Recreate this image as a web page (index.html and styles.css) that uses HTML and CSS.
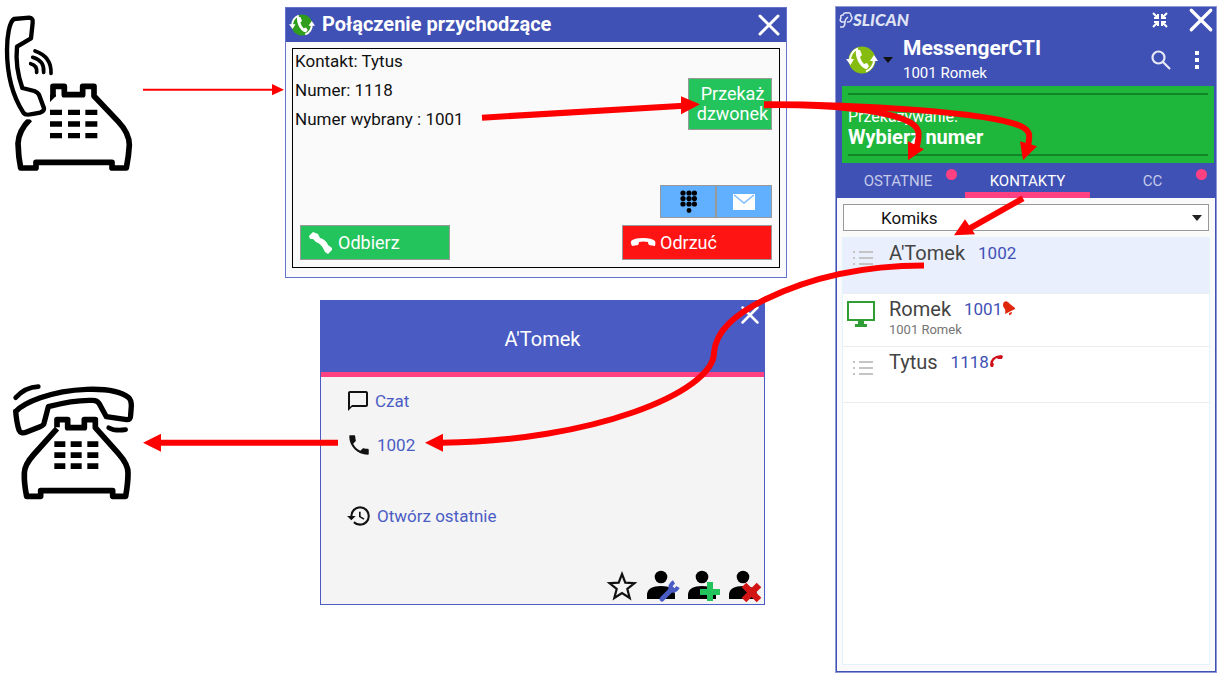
FILE: index.html
```html
<!DOCTYPE html>
<html lang="pl">

<head>
  <meta charset="UTF-8">
  <meta name="viewport" content="width=device-width, initial-scale=1.0">
  <title>MessengerCTI</title>
  <link rel="stylesheet" href="styles.css">
</head>

<body>

  <div class="diagram">

    <!-- telefony -->
    <div class="phones">
      <svg class="phone" viewBox="0 0 450 540" width="150" height="180">
        <g fill="none" stroke="#000" stroke-linejoin="round">
          <path stroke-width="13" d="M42 57L88 53Q100 54 98 68L93 115L51 140C47 180 55 230 67 264L103 273Q113 277 117 284L132 325Q133 334 120 338L88 344Q76 346 70 338C33 280 21 220 21 150C21 110 28 65 42 57Z" />
          <path stroke-width="17" d="M159 290V259H193V284H248V259H282V288L355 365Q388 400 388 435Q386 470 379 504H336V487H108V504H62Q55 470 54 430Q56 392 90 358" />
          <path stroke-width="11" stroke-linecap="round" d="M92 191Q112 196 110 217M98 172Q134 182 131 217M105 153Q155 170 153 220" />
        </g>
        <path d="M150 284H168V288L150 306ZM150 329h36v16h-36zM204 329h36v16h-36zM256 329h36v16h-36zM150 364h36v16h-36zM204 364h36v16h-36zM256 364h36v16h-36zM150 399h36v16h-36zM204 399h36v16h-36zM256 399h36v16h-36z" />
        <path fill="#fff" d="M75 350H110V358H75Z" />
      </svg>
      <svg class="phone" viewBox="0 0 450 420" width="150" height="140">
        <g fill="none" stroke="#000" stroke-linejoin="round" stroke-width="16">
          <path d="M48 124C70 100 150 62 260 58C320 56 365 66 385 82Q394 90 394 108L392 135Q392 150 380 149L319 140L297 100Q291 90 275 91C240 90 190 98 145 110L132 160Q131 166 120 170L80 186Q62 193 57 180Q50 160 47 124Z" />
          <path stroke-width="17" d="M171 172V149H203V173H253V149H286V173L355 250Q386 285 384 310Q384 340 377 379H338V362H122V379H80Q72 340 73 310Q73 285 100 255L171 176" />
          <path stroke-width="14" stroke-linecap="round" d="M47 83Q75 52 115 50M326 173Q345 184 377 179" />
        </g>
        <path d="M163 214h33v17h-33zM212 214h33v17h-33zM262 214h33v17h-33zM163 247h33v17h-33zM212 247h33v17h-33zM262 247h33v17h-33zM163 280h33v17h-33zM212 280h33v17h-33zM262 280h33v17h-33z" />
      </svg>
    </div>

    <div class="dialogs">

      <!-- polaczenie przychodzace -->
      <section class="call">
        <header class="call-head">
          <svg viewBox="0 0 32 32" width="26" height="26">
            <circle cx="16" cy="16" r="13" fill="#2f9e1c" />
            <path d="M12 4.500A12.500 12.500 0 0 0 4 17M20 27.500A12.500 12.500 0 0 0 28 15" fill="none" stroke="#fff" stroke-width="2.500" />
            <path d="M0 15H8L4.500 21ZM24 17H32L28 11Z" fill="#fff" />
            <path d="M10 6L14 6L16 11L14 13Q15 17 18 20L21 19L23 22L21 25Q17 25 13 19Q9 12 10 6Z" fill="#fff" />
          </svg>
          <h2>Połączenie przychodzące</h2>
          <button class="close" aria-label="Zamknij">
            <svg viewBox="0 0 24 24" width="24" height="24"><path d="M3 3L21 21M21 3L3 21" /></svg>
          </button>
        </header>
        <div class="call-box">
          <div class="call-top">
            <div class="call-info">
              <p>Kontakt: Tytus</p>
              <p>Numer: 1118</p>
              <p>Numer wybrany : 1001</p>
            </div>
            <button class="btn btn-pass">Przekaż dzwonek</button>
          </div>
          <div class="call-tools">
            <button class="btn btn-tool" aria-label="Klawiatura">
              <svg viewBox="0 0 18 24" width="18" height="24">
                <g fill="#000">
                  <circle cx="4" cy="3" r="2.600" /><circle cx="10" cy="3" r="2.600" /><circle cx="15.400" cy="3" r="2.600" />
                  <circle cx="4" cy="8.500" r="2.600" /><circle cx="10" cy="8.500" r="2.600" /><circle cx="15.400" cy="8.500" r="2.600" />
                  <circle cx="4" cy="14" r="2.600" /><circle cx="10" cy="14" r="2.600" /><circle cx="15.400" cy="14" r="2.600" />
                  <circle cx="10" cy="20.500" r="2.400" />
                </g>
              </svg>
            </button>
            <button class="btn btn-tool" aria-label="Wiadomość">
              <svg viewBox="0 0 22 18" width="22" height="18">
                <path fill="#fff" d="M0 1H22V17H0Z" />
                <path fill="none" stroke="#7dbdff" stroke-width="1.500" d="M1 2L11 10L21 2" />
              </svg>
            </button>
          </div>
          <div class="call-actions">
            <button class="btn btn-answer">
              <svg viewBox="0 0 26 26" width="26" height="26">
                <path fill="#fff" d="M1 6L5 2L10 4L12 8C16 9 19 12 20 15L24 18L24 20L20 24L17 22L15 18C13 15 11 13 8 12L5 9L2 9Z" />
              </svg>Odbierz
            </button>
            <button class="btn btn-reject">
              <svg viewBox="0 0 26 26" width="26" height="26">
                <path fill="#fff" d="M1 11Q4 8 13 8Q22 8 25 11Q26 13 25 16L19 15Q18 14 18 12Q13 11 9 12Q9 14 8 15L2 16Q0 13 1 11Z" />
              </svg>Odrzuć
            </button>
          </div>
        </div>
      </section>

      <!-- karta kontaktu -->
      <section class="card">
        <header class="card-head">
          <h2>A'Tomek</h2>
          <button class="close card-close" aria-label="Zamknij">
            <svg viewBox="0 0 24 24" width="20" height="20"><path d="M3 3L21 21M21 3L3 21" /></svg>
          </button>
        </header>
        <div class="card-body">
          <a class="card-link" href="#">
            <svg viewBox="0 0 24 24" width="24" height="24"><path d="M20 2H4c-1.100 0-2 .9-2 2v18l4-4h14c1.100 0 2-.9 2-2V4c0-1.100-.9-2-2-2zm0 14H6l-2 2V4h16v12z" /></svg>Czat
          </a>
          <a class="card-link" href="#">
            <svg viewBox="0 0 24 24" width="26" height="26"><path d="M6.620 10.790c1.440 2.830 3.760 5.140 6.590 6.590l2.200-2.200c.27-.27.670-.36 1.020-.24 1.120.37 2.330.57 3.570.57.550 0 1 .45 1 1V20c0 .55-.45 1-1 1-9.390 0-17-7.610-17-17 0-.55.45-1 1-1h3.500c.55 0 1 .45 1 1 0 1.250.2 2.450.57 3.570.11.350.03.740-.25 1.020l-2.200 2.200z" /></svg>1002
          </a>
          <a class="card-link link-history" href="#">
            <svg viewBox="0 0 24 24" width="26" height="26"><path d="M13 3a9 9 0 0 0-9 9H1l3.890 3.890.07.140L9 12H6c0-3.870 3.130-7 7-7s7 3.130 7 7-3.130 7-7 7c-1.930 0-3.680-.79-4.940-2.060l-1.420 1.420A8.954 8.954 0 0 0 13 21a9 9 0 0 0 0-18zm-1 5v5l4.280 2.540.72-1.210-3.500-2.080V8H12z" /></svg>Otwórz ostatnie
          </a>
          <div class="card-tools">
            <button aria-label="Ulubiony">
              <svg viewBox="0 0 36 34" width="36" height="34"><path fill="none" stroke="#111" stroke-width="2.200" d="M18 5L21.300 13.700L30.500 14.200L23.300 20L25.700 29L18 24L10.300 29L12.700 20L5.500 14.200L14.700 13.700Z" /></svg>
            </button>
            <button aria-label="Edytuj kontakt">
              <svg viewBox="0 0 36 34" width="36" height="34">
                <circle cx="16" cy="8" r="6.300" /><path d="M2 30V25Q3 17 16 17Q29 17 30 25V30Z" />
                <path fill="none" stroke="#4a5cc4" stroke-width="5" stroke-linecap="round" d="M17 30L27 20" />
                <path fill="none" stroke="#4a5cc4" stroke-width="4" d="M29 13Q24 16 26 21Q30 23 33 18" />
              </svg>
            </button>
            <button aria-label="Dodaj kontakt">
              <svg viewBox="0 0 36 34" width="36" height="34">
                <circle cx="16" cy="8" r="6.300" /><path d="M2 30V25Q3 17 16 17Q29 17 30 25V30Z" />
                <path stroke="#24c45c" stroke-width="6" d="M24 13V32M14 23H34" />
              </svg>
            </button>
            <button aria-label="Usuń kontakt">
              <svg viewBox="0 0 36 34" width="36" height="34">
                <circle cx="16" cy="8" r="6.300" /><path d="M2 30V25Q3 17 16 17Q29 17 30 25V30Z" />
                <path stroke="#d21414" stroke-width="6.500" d="M17 16L32 31M32 16L17 31" />
              </svg>
            </button>
          </div>
        </div>
      </section>
    </div>

    <!-- okno glowne -->
    <section class="messenger">
      <div class="brand-row">
        <svg viewBox="0 0 14 18" width="14" height="18">
          <path fill="none" stroke="#dfe3f3" stroke-width="1.500" d="M1 16H4Q6 15 6 11H3Q0 10 2 7Q1 4 4 4Q5 1 8 2Q12 1 12 5Q14 7 12 9Q12 11 8 11M6 11Q6 8 9 6" />
        </svg>
        <span class="brand">SLICAN</span>
        <button class="shrink" aria-label="Zwiń">
          <svg viewBox="0 0 18 18" width="18" height="18">
            <path fill="none" stroke="#fff" stroke-width="2" d="M2 2L7 7M16 2L11 7M2 16L7 11M16 16L11 11M3 7H7V3M11 3V7H15M3 11H7V15M15 11H11V15" />
          </svg>
        </button>
        <button class="close" aria-label="Zamknij">
          <svg viewBox="0 0 24 24" width="26" height="26"><path d="M3 3L21 21M21 3L3 21" /></svg>
        </button>
      </div>
      <div class="app-row">
        <svg viewBox="0 0 32 32" width="32" height="32">
          <circle cx="16" cy="16" r="13.500" fill="#86bc10" />
          <path d="M12 4.500A12.500 12.500 0 0 0 4 17M20 27.500A12.500 12.500 0 0 0 28 15" fill="none" stroke="#fff" stroke-width="2" />
          <path d="M0 15H8L4.500 21ZM24 17H32L28 11Z" fill="#fff" />
          <path d="M10 6L14 6L16 11L14 13Q15 17 18 20L21 19L23 22L21 25Q17 25 13 19Q9 12 10 6Z" fill="#fff" />
        </svg>
        <span class="caret"></span>
        <div class="app-name">
          <h1>MessengerCTI</h1>
          <p>1001 Romek</p>
        </div>
        <button aria-label="Szukaj">
          <svg viewBox="0 0 22 22" width="22" height="22"><path fill="none" stroke="#e8eaf6" stroke-width="2.200" d="M13 13L20 20M14.500 8.500A6 6 0 1 1 2.500 8.500A6 6 0 1 1 14.500 8.500Z" /></svg>
        </button>
        <button aria-label="Menu">
          <svg viewBox="0 0 22 22" width="22" height="22"><path fill="#fff" d="M9 2h4v4H9zM9 9h4v4H9zM9 16h4v4H9z" /></svg>
        </button>
      </div>
      <div class="notice">
        <div class="notice-text">
          <p>Przekazywanie:</p>
          <strong>Wybierz numer</strong>
        </div>
      </div>
      <nav class="tabs">
        <button class="tab with-dot">OSTATNIE<i class="dot"></i></button>
        <button class="tab active">KONTAKTY</button>
        <button class="tab">CC<i class="dot"></i></button>
      </nav>
      <div class="contacts">
        <div class="group">
          <select aria-label="Grupa">
            <option>Komiks</option>
          </select>
        </div>
        <ul class="list">
          <li class="selected">
            <svg viewBox="0 0 32 32" width="32" height="32"><path fill="#c4c4c4" d="M8 9h2v2H8zM14 9h14v2H14zM8 15h2v2H8zM14 15h14v2H14zM8 21h2v2H8zM14 21h14v2H14z" /></svg>
            <div>
              <p class="name">A'Tomek <span>1002</span></p>
            </div>
          </li>
          <li class="online">
            <svg viewBox="0 0 32 32" width="32" height="32"><path fill="none" stroke="#2f9e35" stroke-width="2" d="M3 4H29V22H3Z" /><path fill="#2f9e35" d="M2 21H30V23H2ZM13 23H19V26H22V29H10V26H13Z" /></svg>
            <div>
              <p class="name">Romek <span>1001</span><svg viewBox="0 0 14 16" width="14" height="16"><path fill="#e0260b" d="M2 1Q5 -1 8 3L13 7V8L3 13Q4 8 2 7Q0 4 2 1ZM7 12L10 11Q10 14 7 14Z" /></svg></p>
              <p class="sub">1001 Romek</p>
            </div>
          </li>
          <li>
            <svg viewBox="0 0 32 32" width="32" height="32"><path fill="#c4c4c4" d="M8 10h2v2H8zM14 10h14v2H14zM8 16h2v2H8zM14 16h14v2H14zM8 22h2v2H8zM14 22h14v2H14z" /></svg>
            <div>
              <p class="name">Tytus <span>1118</span><svg viewBox="0 0 14 16" width="14" height="16"><path fill="#d0101a" d="M1 11Q1 2 12 1L14 2L13 5L9 5L8 4Q4 6 4 9L5 10L4 13H2Z" /></svg></p>
            </div>
          </li>
        </ul>
      </div>
    </section>

    <!-- strzalki -->
    <svg class="arrows" viewBox="0 0 1225 679" preserveAspectRatio="none" aria-hidden="true">
      <g fill="none" stroke="#f00" stroke-width="6">
        <path stroke-width="2" d="M143 89.500H276" />
        <path d="M482 117.500L684 105.500" />
        <path d="M764 105C830 104 885 110 908 121C920 127 920 133 917 146" />
        <path d="M764 104C860 104 990 112 1021 126C1031 131 1030 136 1028 146" />
        <path d="M1023 198L968 229" />
        <path d="M924 265C866 265 812 276 765 299C735 314 716 330 714 352C714 392 590 441 442 442" />
        <path d="M338 442H160" />
      </g>
      <path fill="#f00" d="M284 89.500L272 84V95ZM700 104L681 96V114ZM908 160L908 141L924 149ZM1023 160L1020 141L1037 146ZM954 235L965 219L975 234ZM425 442L443 433V451ZM143 442L161 433V451Z" />
    </svg>
  </div>

</body>

</html>
```

FILE: styles.css
```css
* {
  margin: 0;
  padding: 0;
  box-sizing: border-box;
}

body {
  background: #fff;
  font-family: Roboto, "Liberation Sans", sans-serif;
  font-size: 18px;
  color: #111;
}

button {
  border: 0;
  background: none;
  font: inherit;
  color: #fff;
}

svg {
  display: block;
  flex: none;
}

li {
  list-style: none;
}

.diagram {
  position: relative;
  display: grid;
  grid-template-columns: 285px minmax(0, 1fr) 382px;
  padding: 0 8px 7px 0;
}

.arrows {
  position: absolute;
  left: 0;
  top: 0;
  width: 100%;
  height: 100%;
  pointer-events: none;
}

.phones {
  display: flex;
  flex-direction: column;
  gap: 190px;
}

.close svg {
  fill: none;
  stroke: #fff;
  stroke-width: 3;
  stroke-linecap: round;
}

/* dialogs */
.dialogs {
  display: flex;
  flex-direction: column;
  gap: 22px;
  padding: 7px 48px 0 0;
}

.call {
  border: 1px solid #6473cb;
  background: #fafafa;
}

.call-head {
  display: flex;
  align-items: center;
  gap: 7px;
  height: 34px;
  padding: 0 5px 0 3px;
  background: #3f51b5;
  color: #fff;
}

.call-head h2 {
  flex: 1;
  font-size: 20px;
  line-height: 24px;
  padding-bottom: 2px;
}

.call-box {
  margin: 6px;
  margin-bottom: 9px;
  padding: 0 7px 7px 2px;
  border: 1px solid #000;
}

.call-top {
  display: flex;
  justify-content: space-between;
  align-items: flex-start;
}

.call-info {
  display: grid;
  gap: 5px;
  font-size: 17px;
  line-height: 24px;
}

.btn {
  display: flex;
  align-items: center;
  border: 1px solid #999;
  background: #24c45c;
}

.btn-pass {
  width: 84px;
  height: 52px;
  margin-top: 29px;
  padding-left: 5px;
  line-height: 20px;
  justify-content: center;
}

.call-tools {
  display: flex;
  justify-content: flex-end;
  margin-top: 54px;
}

.btn-tool {
  width: 56px;
  height: 33px;
  justify-content: center;
  background: #60b0ff;
}

.call-actions {
  display: flex;
  justify-content: space-between;
  margin-top: 7px;
  padding-left: 5px;
}

.btn-answer,
.btn-reject {
  width: 150px;
  height: 35px;
  gap: 4px;
  padding-left: 7px;
}

.btn-reject {
  background: #ff1414;
}

/* contact card */
.card {
  margin: 0 22px 0 35px;
  border: 1px solid #4a5cc4;
  background: #f4f4f4;
}

.card-head {
  position: relative;
  height: 76px;
  border-bottom: 5px solid #ff4081;
  background: #4a5cc4;
  color: #fff;
  text-align: center;
}

.card-head h2 {
  font-size: 20px;
  font-weight: 400;
  line-height: 76px;
}

.card-close {
  position: absolute;
  right: 4px;
  top: 4px;
}

.card-body {
  display: flex;
  flex-direction: column;
  align-items: flex-start;
  padding: 11px 0 1px 25px;
}

.card-link {
  display: flex;
  align-items: center;
  gap: 5px;
  height: 26px;
  margin-bottom: 18px;
  color: #4a5cc4;
  text-decoration: none;
  font-size: 17px;
}

.card-link svg {
  fill: #111;
}

.link-history {
  margin-top: 27px;
}

.card-tools {
  display: flex;
  align-self: flex-end;
  gap: 5px;
  margin-top: 22px;
  padding-right: 1px;
}

/* messenger */
.messenger {
  display: flex;
  flex-direction: column;
  min-height: 667px;
  margin-top: 6px;
  border: 1px solid #8f9ad6;
  background: #3f51b5;
  color: #fff;
}

.brand-row {
  display: flex;
  align-items: center;
  height: 26px;
  padding: 0 2px 0 3px;
}

.brand {
  flex: 1;
  padding-bottom: 2px;
  font: italic 900 17px Lato, sans-serif;
  color: #dfe3f3;
}

.shrink {
  margin-right: 19px;
}

.app-row {
  display: flex;
  align-items: center;
  gap: 5px;
  height: 53px;
  padding: 0 8px 0 10px;
}

.caret {
  border: 5px solid transparent;
  border-top: 6px solid #111;
  border-bottom: 0;
}

.app-name {
  flex: 1;
  padding-left: 5px;
}

.app-name h1 {
  font-size: 21px;
  line-height: 26px;
}

.app-name p {
  font-size: 15px;
  line-height: 24px;
}

.app-row button + button {
  margin-left: 9px;
}

.notice {
  margin: 0 2px 0 6px;
  padding: 7px 6px;
  background: #1fb63c;
}

.notice-text {
  height: 63px;
  padding-top: 12px;
  border-top: 2px solid #128527;
  border-bottom: 2px solid #128527;
  line-height: 20px;
}

.notice-text p {
  font-size: 16px;
}

.notice-text strong {
  font-size: 20px;
}

.tabs {
  display: grid;
  grid-template-columns: repeat(3, 1fr);
  padding: 0 1px 0 4px;
}

.tab {
  position: relative;
  height: 35px;
  padding-top: 6px;
  border-bottom: 6px solid transparent;
  font-size: 15px;
  color: #c5cae9;
}

.tab.with-dot {
  padding-right: 9px;
}

.tab.active {
  border-color: #ff4081;
  color: #fff;
}

.dot {
  position: absolute;
  right: 8px;
  top: 6px;
  width: 11px;
  height: 11px;
  border-radius: 50%;
  background: #ff4081;
}

.contacts {
  flex: 1;
  display: flex;
  flex-direction: column;
  padding: 6px 5px;
  border: 1px solid #3f51b5;
  border-top: 0;
  background: #fafafa;
}

.group {
  position: relative;
  margin: 0 1px 6px;
}

.group::after {
  content: "";
  position: absolute;
  right: 7px;
  top: 11px;
  border: 5px solid transparent;
  border-top: 6px solid #222;
  border-bottom: 0;
  pointer-events: none;
}

.group select {
  display: block;
  width: 100%;
  height: 27px;
  padding-left: 37px;
  border: 1px solid #999;
  border-radius: 0;
  appearance: none;
  background: #fff;
  font: inherit;
  font-size: 17px;
  color: #111;
}

.list {
  flex: 1;
  border: 1px solid #e3f4fd;
  background: #fff;
}

.list li {
  display: flex;
  gap: 12px;
  height: 56px;
  padding: 4px 2px;
  border-bottom: 1px solid #ededed;
}

.list .selected {
  background: #e9effd;
}

.list .online {
  height: 53px;
}

.name {
  display: flex;
  align-items: center;
  height: 22px;
  font-size: 20px;
  color: #444;
}

.name span {
  margin-left: 13px;
  font-size: 17px;
  color: #3f51b5;
}

.sub {
  font-size: 13px;
  line-height: 20px;
  color: #757575;
}
```
